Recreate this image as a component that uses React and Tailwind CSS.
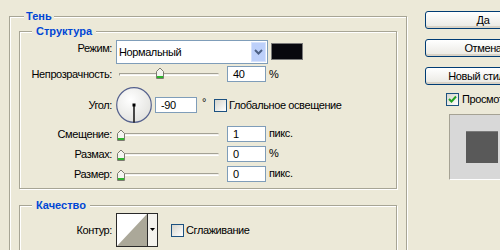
import React from "react";

function Thumb({ className }) {
  return (
    <svg className={className} width="8" height="12" viewBox="0 0 8 12">
      <path d="M0.5 11.5V4.5L4 1L7.5 4.5V11.5Z" fill="#F4F4F0" stroke="#7C7B70" />
      <rect x="1" y="9" width="6" height="2" fill="#2DB52D" />
    </svg>
  );
}

function Slider({ thumbClass }) {
  return (
    <div className="relative w-[111px] h-[16px] shrink-0">
      <div className="absolute left-[3px] top-[7px] w-[100px] h-[3px] border-t border-l border-[#A4A295] border-b border-b-white bg-[#F2F1EC] rounded-r-[2px]" />
      <Thumb className={thumbClass} />
    </div>
  );
}

function Input({ value, w = "w-[39px]" }) {
  return (
    <div className={`${w} h-[16px] shrink-0 border border-[#7F9DB9] bg-white pl-[5px] flex items-center`}>
      {value}
    </div>
  );
}

function Check({ checked }) {
  return (
    <div className="w-[13px] h-[13px] shrink-0 border border-[#1C5180] bg-linear-to-br from-[#D6D5CC] to-white flex items-center justify-center">
      {checked && (
        <svg width="11" height="11" viewBox="0 0 11 11">
          <path d="M2 5 L4.5 7.5 L9 2.5" fill="none" stroke="#21A121" strokeWidth="2" />
        </svg>
      )}
    </div>
  );
}

function Label({ children, extra = "" }) {
  return <div className={`w-[92px] shrink-0 text-right ${extra}`}>{children}</div>;
}

function Button({ children }) {
  return (
    <div className="w-[116px] h-[18px] shrink-0 rounded-[3px] border border-[#003C74] bg-linear-to-b from-white to-[#E9E8E2] shadow-[inset_0_-2px_0_#D8D2C6] flex items-center justify-center">
      {children}
    </div>
  );
}

const etched =
  "border border-[#A7A595] shadow-[1px_1px_0_#fff,inset_1px_1px_0_#fff]";
const legend = "bg-[#ECE9D8] font-bold text-[#0046D5] leading-[13px] tracking-normal";

export default function App() {
  return (
    <div className="w-[500px] h-[250px] overflow-hidden bg-[#ECE9D8] flex items-start text-[11px] leading-[13px] tracking-[-0.4px] text-black font-['Liberation_Sans',Arial,sans-serif]">
      <div className="pl-[9px] pt-[10px] shrink-0">
        <fieldset className={`w-[398px] px-[9px] pb-[20px] ${etched}`}>
          <legend className={`ml-[5px] px-[2px] ${legend}`}>Тень</legend>

          <fieldset className={`mt-[2px] w-[378px] pb-[6px] ${etched}`}>
            <legend className={`ml-[12px] px-[4px] ${legend}`}>Структура</legend>

            <div className="mt-[2px] flex items-start h-[24px]">
              <Label extra="pt-[2px]">Режим:</Label>
              <div className="ml-[4px] w-[152px] h-[24px] shrink-0 border border-[#7F9DB9] bg-white flex items-start">
                <div className="flex-1 pl-[2px] pt-[5px]">Нормальный</div>
                <div className="mt-[1px] mr-[1px] w-[15px] h-[20px] bg-[#BDD0FA] border border-[#D6E2FC] flex items-center justify-center">
                  <svg width="9" height="6" viewBox="0 0 9 6">
                    <path d="M1 1 L4.5 4.5 L8 1" fill="none" stroke="#4D6185" strokeWidth="2" />
                  </svg>
                </div>
              </div>
              <div className="ml-[3px] mt-[3px] w-[32px] h-[17px] border border-[#7A7A7A] bg-[#08080E]" />
            </div>

            <div className="mt-[2px] flex items-center h-[16px]">
              <Label>Непрозрачность:</Label>
              <div className="ml-[4px]">
                <Slider thumbClass="absolute left-[40px] top-[1px]" />
              </div>
              <Input value="40" />
              <div className="ml-[3px]">%</div>
            </div>

            <div className="mt-[5px] flex items-center h-[36px]">
              <Label>Угол:</Label>
              <svg className="ml-[4px] shrink-0" width="36" height="36" viewBox="0 0 36 36">
                <defs>
                  <radialGradient id="dial" cx="40%" cy="35%" r="70%">
                    <stop offset="0" stopColor="#FFFFFF" />
                    <stop offset="1" stopColor="#E2E2DE" />
                  </radialGradient>
                </defs>
                <circle cx="18" cy="18" r="17.3" fill="url(#dial)" stroke="#56628E" strokeWidth="1.2" />
                <rect x="16.5" y="16.5" width="3" height="3" fill="#000" />
                <line x1="18" y1="18" x2="18" y2="35.5" stroke="#000" strokeWidth="1.4" />
              </svg>
              <div className="ml-[3px]">
                <Input value="-90" w="w-[42px]" />
              </div>
              <div className="ml-[5px] w-[12px] mb-[6px]">°</div>
              <Check />
              <div className="ml-[2px]">Глобальное освещение</div>
            </div>

            <div className="mt-[3px] flex items-center h-[16px]">
              <Label>Смещение:</Label>
              <div className="ml-[4px]">
                <Slider thumbClass="absolute left-[1px] top-[3px]" />
              </div>
              <Input value="1" />
              <div className="ml-[3px] mb-[2px]">пикс.</div>
            </div>

            <div className="mt-[4px] flex items-center h-[16px]">
              <Label>Размах:</Label>
              <div className="ml-[4px]">
                <Slider thumbClass="absolute left-[1px] top-[3px]" />
              </div>
              <Input value="0" />
              <div className="ml-[3px] mb-[2px]">%</div>
            </div>

            <div className="mt-[4px] flex items-center h-[16px]">
              <Label>Размер:</Label>
              <div className="ml-[4px]">
                <Slider thumbClass="absolute left-[1px] top-[3px]" />
              </div>
              <Input value="0" />
              <div className="ml-[3px] mb-[2px]">пикс.</div>
            </div>
          </fieldset>

          <fieldset className={`mt-[10px] w-[378px] h-[80px] ${etched}`}>
            <legend className={`ml-[12px] px-[4px] ${legend}`}>Качество</legend>
            <div className="mt-[1px] flex items-center">
              <Label>Контур:</Label>
              <div className="ml-[4px] w-[42px] h-[34px] shrink-0 border border-[#2A2A2A] bg-[#F4F3EE] flex">
                <svg className="shrink-0" width="30" height="32" viewBox="0 0 30 32">
                  <rect x="0" y="0" width="30" height="32" fill="#FFFFFF" />
                  <path d="M0 32 L30 0 L30 32 Z" fill="#ABA899" />
                </svg>
                <div className="w-px h-full bg-[#2A2A2A]" />
                <div className="flex-1 flex items-center justify-center pb-[1px]">
                  <svg width="5" height="3" viewBox="0 0 5 3">
                    <path d="M0 0 H5 L2.5 3 Z" fill="#000" />
                  </svg>
                </div>
              </div>
              <div className="ml-[13px]">
                <Check />
              </div>
              <div className="ml-[2px]">Сглаживание</div>
            </div>
          </fieldset>
        </fieldset>
      </div>

      <div className="ml-[18px] pt-[11px] flex flex-col shrink-0">
        <Button>Да</Button>
        <div className="mt-[10px]">
          <Button>Отмена</Button>
        </div>
        <div className="mt-[10px]">
          <Button>Новый стиль...</Button>
        </div>
        <div className="mt-[8px] pl-[21px] flex items-center">
          <Check checked />
          <div className="ml-[3px]">Просмотр</div>
        </div>
        <div className="mt-[8px] ml-[24px] w-[66px] h-[66px] border border-[#A5A294] border-b-white border-r-white bg-[#D8D8D8] p-[16px]">
          <div className="w-[32px] h-[32px] bg-[#595959] border-t border-[#7A7A7A]" />
        </div>
      </div>
    </div>
  );
}
